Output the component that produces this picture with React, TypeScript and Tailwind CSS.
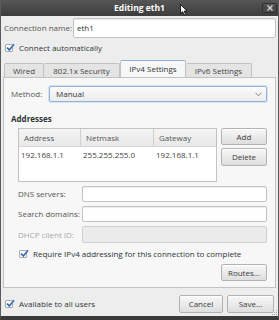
import React from 'react';

const font = "font-['Open_Sans','DejaVu_Sans',sans-serif]";

function Check() {
  return (
    <span className="relative flex h-[8px] w-[8px] shrink-0 items-center justify-center rounded-[1px] border border-[#a9a9a9] bg-white">
      <svg width="9" height="9" viewBox="0 0 9 9" className="absolute -top-[2px] left-[0px]">
        <path d="M1 4.6 L3.4 7 L8 1.2" stroke="#3d6fb5" strokeWidth="1.8" fill="none" />
      </svg>
    </span>
  );
}

function Btn({ children, className = '' }: { children: React.ReactNode; className?: string }) {
  return (
    <div
      className={`flex items-center justify-center rounded-[2px] border border-[#b3b3b3] bg-gradient-to-b from-[#f8f8f8] to-[#dedede] text-[#3b3b3b] shadow-[inset_0_1px_0_#fff] ${className}`}
    >
      {children}
    </div>
  );
}

function Field({ className = '', children }: { className?: string; children?: React.ReactNode }) {
  return (
    <div className={`flex items-center rounded-[2px] border border-[#c3c3c3] bg-white shadow-[inset_0_1px_1px_rgba(0,0,0,0.08)] ${className}`}>
      {children}
    </div>
  );
}

export default function App() {
  return (
    <div className={`${font} relative flex h-[320px] w-[279px] flex-col overflow-hidden whitespace-nowrap border-x border-b-[4px] border-x-[#5a5a5a] border-b-[#3a3a3a] bg-[#ededed] text-[8px] text-[#2e3436]`}>
      {/* title bar */}
      <div className="relative flex h-[16px] shrink-0 items-center justify-center bg-gradient-to-b from-[#565656] to-[#3d3d3d] text-[8.5px] font-bold text-white">
        Editing eth1
        <div className="absolute right-[1px] top-[3px] flex h-[10px] w-[15px] items-center justify-center rounded-[2px] border border-[#2e2e2e] bg-[#4a4a4a] shadow-[inset_0_1px_0_#5e5e5e]">
          <svg width="6" height="6" viewBox="0 0 6 6">
            <path d="M0.5 0.5 L5.5 5.5 M5.5 0.5 L0.5 5.5" stroke="#d8d8d8" strokeWidth="1.4" />
          </svg>
        </div>
        <svg width="8" height="12" viewBox="0 0 8 12" className="absolute left-[179px] top-[4px]">
          <path d="M0.5 0.5 L0.5 9.5 L2.6 7.6 L4.2 11 L5.6 10.4 L4.1 7.1 L7 7.1 Z" fill="#fff" stroke="#000" strokeWidth="0.8" />
        </svg>
      </div>

      {/* connection name */}
      <div className="mt-[2px] flex h-[20px] items-center pl-[3px] pr-[2px]">
        <span className="w-[69px] shrink-0 text-[#555]">Connection name:</span>
        <Field className="h-[20px] flex-1 pl-[3px]">eth1</Field>
      </div>

      <div className="mt-[3px] flex h-[14px] items-center gap-[6px] pl-[4px]">
        <Check />
        <span>Connect automatically</span>
      </div>

      {/* tabs */}
      <div className="mt-[5px] flex h-[17px] items-end pl-[3px]">
        <div className="flex h-[14px] w-[40px] items-center justify-center rounded-t-[2px] border border-b-0 border-[#c2c2c2] bg-[#e4e4e4] text-[#444]">Wired</div>
        <div className="flex h-[14px] w-[76px] items-center justify-center rounded-t-[2px] border border-b-0 border-l-0 border-[#c2c2c2] bg-[#e4e4e4] text-[#444]">802.1x Security</div>
        <div className="flex h-[17px] w-[66px] items-center justify-center rounded-t-[2px] border border-b-0 border-[#c2c2c2] border-t-[#8fb3da] bg-[#f7f7f7]">IPv4 Settings</div>
        <div className="flex h-[14px] w-[66px] items-center justify-center rounded-t-[2px] border border-b-0 border-l-0 border-[#c2c2c2] bg-[#e4e4e4] text-[#444]">IPv6 Settings</div>
      </div>

      {/* panel */}
      <div className="mx-[2px] flex h-[211px] flex-col border border-[#c2c2c2] bg-[#f7f7f7] pl-[7px] pr-[8px]">
        <div className="mt-[8px] flex h-[16px] items-center">
          <span className="w-[38px] shrink-0 text-[#555]">Method:</span>
          <div className="flex h-[16px] flex-1 items-center justify-between rounded-[2px] border border-[#8fb3da] bg-gradient-to-b from-[#fbfbfb] to-[#ececec] pl-[6px] pr-[4px] shadow-[0_0_0_1px_#d5e3f2]">
            <span>Manual</span>
            <svg width="7" height="5" viewBox="0 0 7 5">
              <path d="M0.5 0.8 L3.5 3.8 L6.5 0.8" stroke="#777" strokeWidth="0.9" fill="none" />
            </svg>
          </div>
        </div>

        <div className="mt-[12px] h-[10px] font-bold leading-[10px]">Addresses</div>

        <div className="mt-[4px] flex pl-[7px]">
          <div className="flex h-[54px] w-[199px] shrink-0 flex-col border border-[#c2c2c2] bg-white">
            <div className="flex h-[18px] border-b border-[#d5d5d5] bg-gradient-to-b from-[#f4f4f4] to-[#e9e9e9] text-[#555]">
              <div className="flex w-[62px] items-center border-r border-[#cfcfcf] pl-[5px]">Address</div>
              <div className="flex w-[73px] items-center border-r border-[#cfcfcf] pl-[5px]">Netmask</div>
              <div className="flex flex-1 items-center pl-[5px]">Gateway</div>
            </div>
            <div className="flex h-[16px] items-center text-[#444]">
              <div className="w-[62px] pl-[2px]">192.168.1.1</div>
              <div className="w-[73px] pl-[2px]">255.255.255.0</div>
              <div className="flex-1 pl-[2px]">192.168.1.1</div>
            </div>
          </div>
          <div className="ml-[4px] flex flex-1 flex-col gap-[3px]">
            <Btn className="h-[17px]">Add</Btn>
            <Btn className="h-[18px]">Delete</Btn>
          </div>
        </div>

        <div className="mt-[4px] flex flex-col gap-[4px] pl-[7px]">
          <div className="flex h-[16px] items-center">
            <span className="w-[64px] shrink-0 text-[#555]">DNS servers:</span>
            <Field className="h-[16px] flex-1" />
          </div>
          <div className="flex h-[16px] items-center">
            <span className="w-[64px] shrink-0 text-[#555]">Search domains:</span>
            <Field className="h-[16px] flex-1" />
          </div>
          <div className="flex h-[17px] items-center">
            <span className="w-[64px] shrink-0 text-[#a8a8a8]">DHCP client ID:</span>
            <div className="h-[17px] flex-1 rounded-[2px] border border-[#d0d0d0] bg-[#ebebeb]" />
          </div>
        </div>

        <div className="mt-[5px] flex h-[12px] items-center gap-[6px] pl-[8px]">
          <Check />
          <span>Require IPv4 addressing for this connection to complete</span>
        </div>

        <div className="mt-[4px] flex justify-end">
          <Btn className="h-[17px] w-[46px]">Routes...</Btn>
        </div>
      </div>

      {/* bottom */}
      <div className="mt-[7px] flex h-[18px] items-center pl-[4px] pr-[4px]">
        <Check />
        <span className="ml-[6px]">Available to all users</span>
        <div className="ml-auto flex gap-[4px]">
          <Btn className="h-[18px] w-[44px]">Cancel</Btn>
          <Btn className="h-[18px] w-[47px]">Save...</Btn>
        </div>
      </div>

      <svg width="6" height="6" viewBox="0 0 6 6" className="absolute bottom-[0px] right-[0px]">
        <rect x="4" y="0" width="1" height="1" fill="#aaa" />
        <rect x="2" y="2" width="1" height="1" fill="#aaa" />
        <rect x="4" y="2" width="1" height="1" fill="#aaa" />
        <rect x="0" y="4" width="1" height="1" fill="#aaa" />
        <rect x="2" y="4" width="1" height="1" fill="#aaa" />
        <rect x="4" y="4" width="1" height="1" fill="#aaa" />
      </svg>
    </div>
  );
}
